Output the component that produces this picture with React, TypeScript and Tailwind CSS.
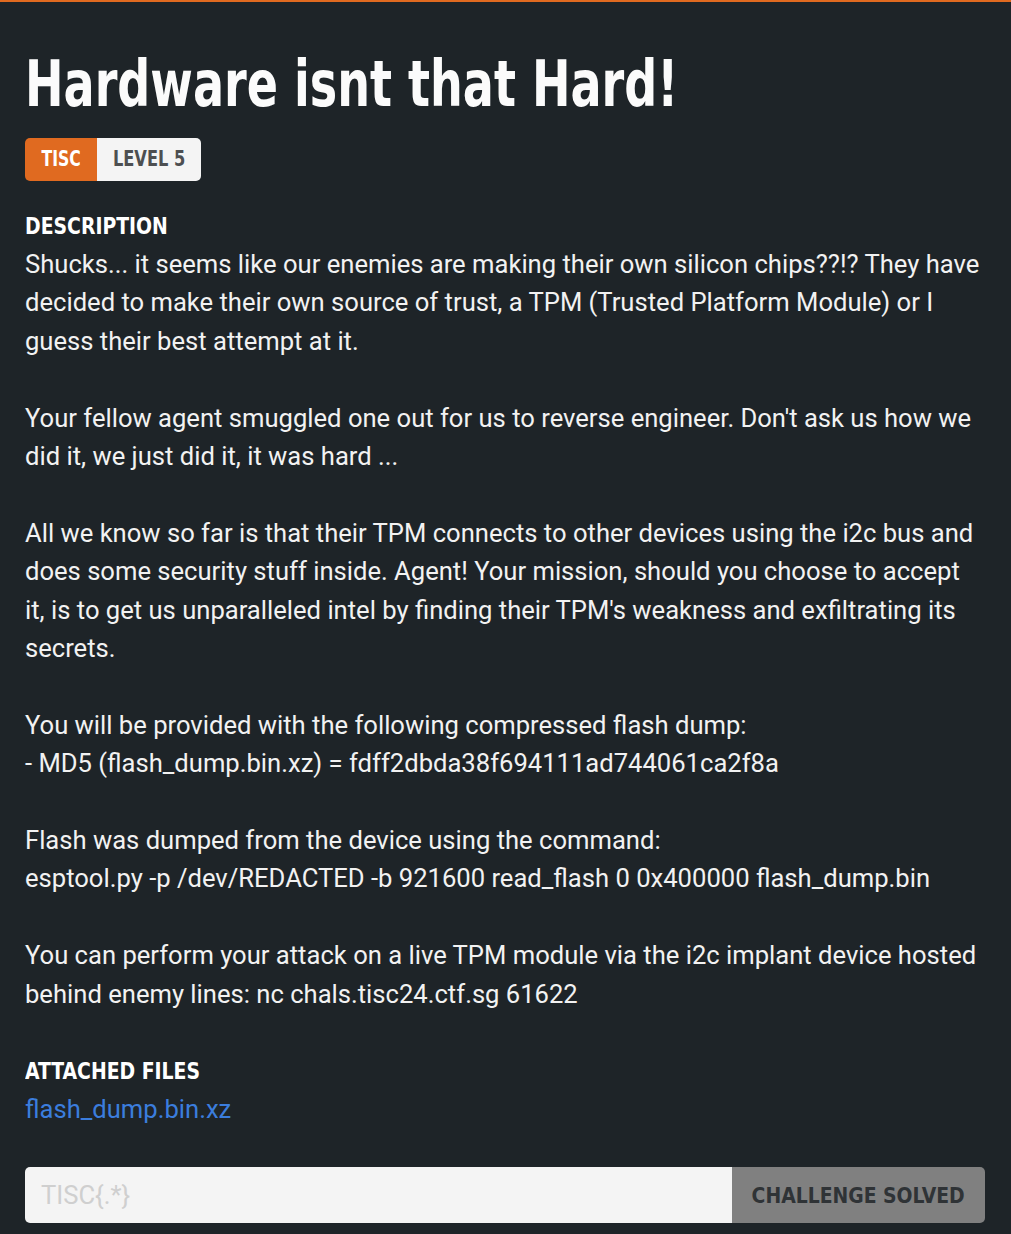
import React from 'react';

const paragraphs: string[] = [
  'Shucks... it seems like our enemies are making their own silicon chips??!? They have decided to make their own source of trust, a TPM (Trusted Platform Module) or I guess their best attempt at it.',
  "Your fellow agent smuggled one out for us to reverse engineer. Don't ask us how we did it, we just did it, it was hard ...",
  "All we know so far is that their TPM connects to other devices using the i2c bus and does some security stuff inside. Agent! Your mission, should you choose to accept it, is to get us unparalleled intel by finding their TPM's weakness and exfiltrating its secrets.",
  'You will be provided with the following compressed flash dump:\n- MD5 (flash_dump.bin.xz) = fdff2dbda38f694111ad744061ca2f8a',
  'Flash was dumped from the device using the command:\nesptool.py -p /dev/REDACTED -b 921600 read_flash 0 0x400000 flash_dump.bin',
  'You can perform your attack on a live TPM module via the i2c implant device hosted behind enemy lines: nc chals.tisc24.ctf.sg 61622',
];

// condensed display face for headings
const heading = "font-['DejaVu_Sans_Condensed','DejaVu_Sans',sans-serif] font-bold";

export default function App() {
  return (
    <div className="min-h-[1234px] w-[1011px] bg-[#1e2428] border-t-2 border-[#e06a20] font-['Roboto',sans-serif] text-[#f2f2f2]">
      <div className="px-[25px] pt-[46px]">
        <h1 className={`${heading} text-[64px] leading-[72px] text-[#fbfbfb]`}>
          <span className="inline-block origin-left scale-x-[0.8] whitespace-nowrap">Hardware isnt that Hard!</span>
        </h1>

        <div className="mt-[18px] flex w-fit overflow-hidden rounded-[5px] text-[20.5px] leading-[43px]">
          <span className={`${heading} flex w-[72px] justify-center bg-[#e06a20] text-white`}>
            <span className="inline-block scale-x-[0.85]">TISC</span>
          </span>
          <span className={`${heading} flex w-[104px] justify-center bg-[#f4f4f4] text-[#4d4f51]`}>
            <span className="inline-block scale-x-[0.88] whitespace-nowrap">LEVEL 5</span>
          </span>
        </div>

        <div className="mt-[26px]">
          <h2 className={`${heading} text-[23px] leading-[38px] text-white`}>
            <span className="inline-block origin-left scale-x-[0.91]">DESCRIPTION</span>
          </h2>
          <div className="flex w-[956px] flex-col gap-[38.4px] text-[25.6px] leading-[38.4px]">
            {paragraphs.map((p, i) => (
              <p key={i} className="whitespace-pre-line">
                {p}
              </p>
            ))}
          </div>
        </div>

        <div className="mt-[39px]">
          <h2 className={`${heading} text-[23px] leading-[38px] text-white`}>
            <span className="inline-block origin-left scale-x-[0.91] whitespace-nowrap">ATTACHED FILES</span>
          </h2>
          <a href="#" className="text-[25.6px] leading-[38.4px] text-[#3b7ddd]">
            flash_dump.bin.xz
          </a>
        </div>

        <div className="mt-[39px] flex h-[56px] w-[960px] overflow-hidden rounded-[5px]">
          <input
            type="text"
            placeholder="TISC{.*}"
            className="flex-1 bg-[#f4f4f4] px-[16px] text-[25.6px] text-[#333] outline-none placeholder:text-[#cfcfcf]"
          />
          <button className={`${heading} flex w-[253px] items-center justify-center bg-[#808080] text-[22px] text-[#2f3336]`}>
            <span className="inline-block scale-x-[0.95] whitespace-nowrap">CHALLENGE SOLVED</span>
          </button>
        </div>
      </div>
    </div>
  );
}
